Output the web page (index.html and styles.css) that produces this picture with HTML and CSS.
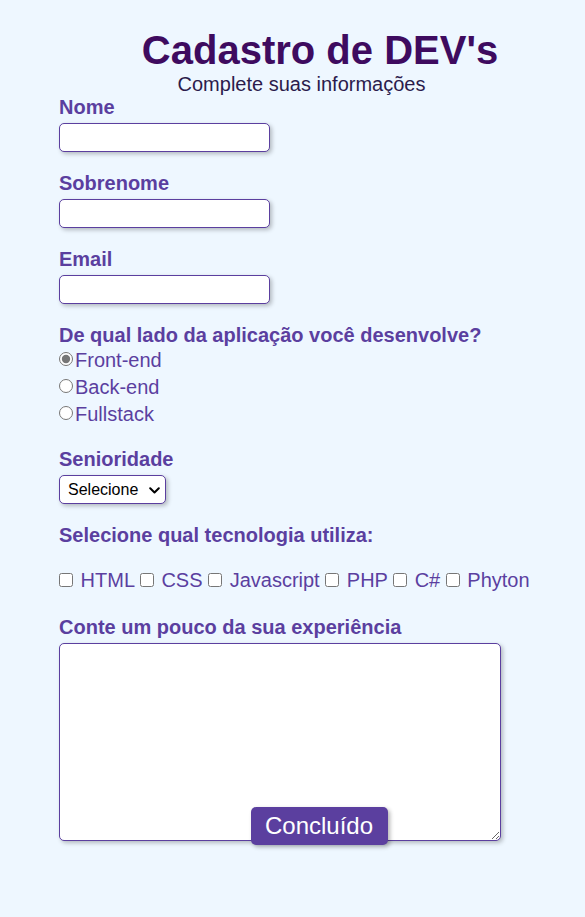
FILE: index.html
```html
<!DOCTYPE html>
<html lang="pt-BR">
<head>
<meta charset="utf-8">
<title>Cadastro de DEV's</title>
<link rel="stylesheet" href="styles.css">
</head>
<body>
<main class="page">
  <header class="header">
    <h1 class="title">Cadastro de DEV's</h1>
    <p class="subtitle">Complete suas informações</p>
  </header>
  <form class="form">
    <div class="field">
      <label class="label" for="nome">Nome</label>
      <input class="text-input" id="nome" type="text">
    </div>
    <div class="field">
      <label class="label" for="sobrenome">Sobrenome</label>
      <input class="text-input" id="sobrenome" type="text">
    </div>
    <div class="field">
      <label class="label" for="email">Email</label>
      <input class="text-input" id="email" type="email">
    </div>
    <div class="field">
      <span class="label">De qual lado da aplicação você desenvolve?</span>
      <div class="radios">
        <label class="radio-row"><input class="radio" type="radio" name="lado" checked>Front-end</label>
        <label class="radio-row"><input class="radio" type="radio" name="lado">Back-end</label>
        <label class="radio-row"><input class="radio" type="radio" name="lado">Fullstack</label>
      </div>
    </div>
    <div class="field">
      <label class="label" for="senioridade">Senioridade</label>
      <div class="select-wrap">
        <select class="select" id="senioridade">
          <option>Selecione</option>
          <option>Júnior</option>
          <option>Pleno</option>
          <option>Sênior</option>
        </select>
        <svg class="chevron" width="11" height="7" viewBox="0 0 11 7" aria-hidden="true"><path d="M1.2 1.2 L5.5 5.5 L9.8 1.2" fill="none" stroke="#000" stroke-width="2" stroke-linecap="round" stroke-linejoin="round"/></svg>
      </div>
    </div>
    <div class="field">
      <span class="label">Selecione qual tecnologia utiliza:</span>
      <div class="checks">
        <input class="check" type="checkbox"> HTML <input class="check" type="checkbox"> CSS <input class="check" type="checkbox"> Javascript <input class="check" type="checkbox"> PHP <input class="check" type="checkbox"> C# <input class="check" type="checkbox"> Phyton
      </div>
    </div>
    <div class="field">
      <label class="label" for="exp">Conte um pouco da sua experiência</label>
      <textarea class="textarea" id="exp"></textarea>
      <div class="actions">
        <button class="button" type="button">Concluído</button>
      </div>
    </div>
  </form>
</main>
</body>
</html>
```

FILE: styles.css
```css
html, body {
  margin: 0;
  padding: 0;
}
body {
  background: #eef7ff;
  font-family: "Liberation Sans", Arial, sans-serif;
  min-height: 917px;
}
.page {
  padding: 27px 4px 0 59px;
}
.header {
  text-align: center;
}
.title {
  margin: 0;
  font-size: 40px;
  line-height: 46px;
  font-weight: bold;
  color: #3e0b5f;
}
.subtitle {
  margin: 0 37px 0 0;
  font-size: 20px;
  line-height: 23px;
  color: #2b1b4c;
}
.form {
  display: flex;
  flex-direction: column;
  gap: 20px;
}
.field {
  display: flex;
  flex-direction: column;
  align-items: flex-start;
}
.label {
  font-size: 20px;
  line-height: 23px;
  font-weight: bold;
  color: #5b3f9f;
}
.text-input {
  box-sizing: border-box;
  margin-top: 4px;
  width: 211px;
  height: 29px;
  border: 1px solid #5b3f9f;
  border-radius: 5px;
  background: #fff;
  box-shadow: 2px 2px 4px rgba(0, 0, 0, 0.25);
  outline: none;
}
.radios {
  display: flex;
  flex-direction: column;
}
.radio-row {
  display: flex;
  align-items: center;
  font-size: 20px;
  line-height: 27px;
  color: #5b3f9f;
}
.radio {
  margin: 0 2px 3px 0;
  width: 14px;
  height: 14px;
  accent-color: #767676;
}
.select-wrap {
  position: relative;
  margin-top: 4px;
}
.select {
  appearance: none;
  -webkit-appearance: none;
  display: block;
  box-sizing: border-box;
  width: 107px;
  height: 29px;
  border: 1px solid #5b3f9f;
  border-radius: 5px;
  background: #fff;
  font-family: "Liberation Sans", Arial, sans-serif;
  font-size: 16px;
  color: #000;
  padding: 0 20px 0 8px;
  box-shadow: 2px 2px 4px rgba(0, 0, 0, 0.25);
}
.chevron {
  position: absolute;
  right: 6px;
  top: 12px;
  pointer-events: none;
}
.checks {
  margin-top: 22px;
  font-size: 20px;
  line-height: 23px;
  color: #5b3f9f;
  margin-bottom: 4px;
}
.check {
  margin: 0 2px 0 0;
  width: 14px;
  height: 14px;
  vertical-align: 0;
}
.textarea {
  box-sizing: border-box;
  margin-top: 4px;
  width: 442px;
  height: 198px;
  border: 1px solid #5b3f9f;
  border-radius: 5px;
  background: #fff;
  box-shadow: 2px 2px 4px rgba(0, 0, 0, 0.25);
  resize: both;
  outline: none;
}
.actions {
  align-self: stretch;
  display: flex;
  justify-content: center;
  width: 520px;
  margin-top: -34px;
  position: relative;
}
.button {
  width: 137px;
  height: 38px;
  border: none;
  border-radius: 5px;
  background: #5b3f9f;
  color: #fff;
  font-family: "Liberation Sans", Arial, sans-serif;
  font-size: 24px;
  box-shadow: 2px 2px 4px rgba(0, 0, 0, 0.3);
  cursor: pointer;
}
```
